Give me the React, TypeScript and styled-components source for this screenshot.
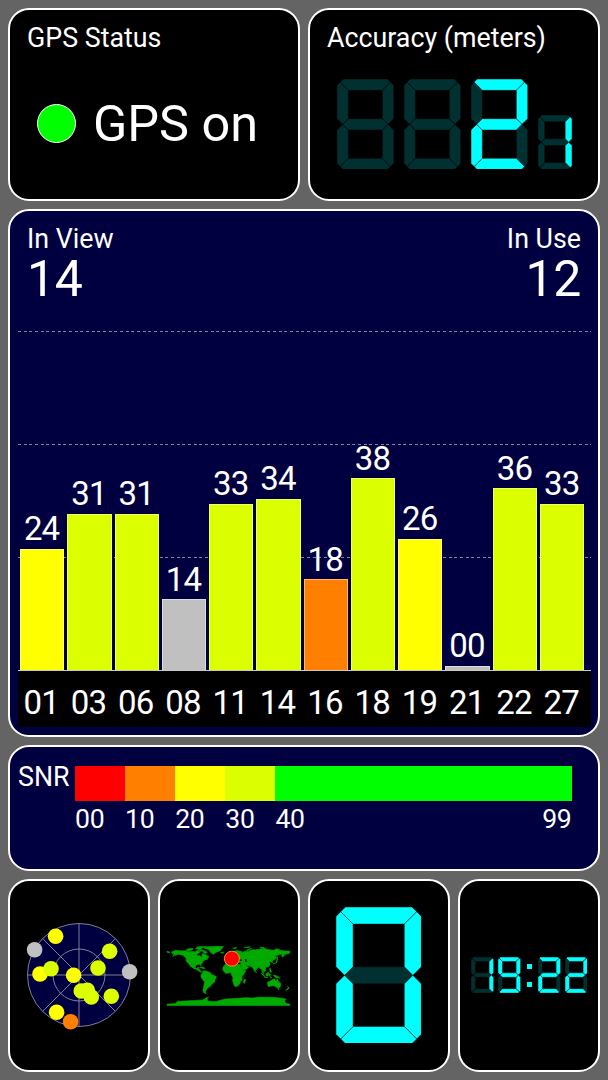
import React from "react";
import styled, { createGlobalStyle } from "styled-components";

const Global = createGlobalStyle`
  * { box-sizing: border-box; }
  body {
    margin: 0;
    background: #646464;
    color: #fff;
    font-family: Roboto, "Liberation Sans", sans-serif;
  }
`;

const C = {
  red: "#ff0000",
  orange: "#ff8000",
  yellow: "#ffff00",
  lime: "#dcff00",
  green: "#00ff00",
  grey: "#c0c0c0",
  lit: "#00ffff",
  unlit: "#003030",
};

const Screen = styled.main`
  width: 608px;
  height: 1080px;
  padding: 8px;
  display: grid;
  grid-template-rows: 192.5px 528px 126px 193px;
  row-gap: 8px;
  overflow: hidden;
`;

const Row = styled.div<{ $cols: number }>`
  display: grid;
  grid-template-columns: repeat(${(p) => p.$cols}, 1fr);
  column-gap: 8px;
`;

const Panel = styled.section<{ $navy?: boolean }>`
  display: flex;
  flex-direction: column;
  min-width: 0;
  border: 2px solid #fff;
  border-radius: 21px;
  background: ${(p) => (p.$navy ? "#000040" : "#000")};
`;

const StatusPanel = styled(Panel)`
  padding: 13px 16px 0 17px;
`;

const Title = styled.h2`
  margin: 0;
  font-size: 26.8px;
  line-height: 30px;
  font-weight: 400;
  white-space: nowrap;
`;

const StatusLine = styled.div`
  display: flex;
  align-items: center;
  gap: 17.5px;
  margin: 42.5px 0 0 9.5px;
  font-size: 50.4px;
  line-height: 56px;
  white-space: nowrap;
`;

const Lamp = styled.span`
  width: 39px;
  height: 39px;
  border: 1px solid #fff;
  border-radius: 50%;
  background: ${C.green};
`;

const AccuracyDigits = styled.div`
  display: flex;
  align-items: flex-end;
  gap: 10.3px;
  margin: 25.5px 0 0 10px;
`;

const ChartHeader = styled.div`
  display: flex;
  justify-content: space-between;
  height: 120px;
  padding: 13px 17px 0 17px;
`;

const Count = styled.div<{ $right?: boolean }>`
  text-align: ${(p) => (p.$right ? "right" : "left")};
`;

const CountValue = styled.div`
  font-size: 50px;
  line-height: 50px;
  letter-spacing: -0.3px;
`;

const gridLine =
  "repeating-linear-gradient(90deg, #8484a0 0 3px, transparent 3px 5.667px)";

const Plot = styled.div`
  display: grid;
  grid-template-columns: repeat(12, 1fr);
  column-gap: 3px;
  align-items: end;
  height: 340px;
  margin: 0 7.5px;
  padding: 0 6.2px 0 2.5px;
  border-bottom: 1px solid #c8c8c8;
  background-image: ${gridLine}, ${gridLine}, ${gridLine};
  background-size: 100% 1px;
  background-position: 0 0, 0 113px, 0 226px;
  background-repeat: no-repeat;
`;

const BarCell = styled.div`
  display: flex;
  flex-direction: column;
  align-items: center;
  font-size: 33px;
  line-height: 38px;
  letter-spacing: -0.8px;
`;

const BarValue = styled.span`
  margin-right: 1px;
`;

const Bar = styled.div<{ $h: number; $color: string }>`
  width: 100%;
  height: ${(p) => p.$h}px;
  margin-top: 0.5px;
  border: 1px solid rgba(255, 255, 255, 0.45);
  border-bottom: 0;
  background: ${(p) => p.$color};
`;

const Ids = styled.div`
  display: grid;
  grid-template-columns: repeat(12, 1fr);
  column-gap: 3px;
  height: 56px;
  margin: 0 7.5px;
  padding: 13px 7px 0 1.5px;
  background: #000;
  font-size: 33px;
  line-height: 38px;
  letter-spacing: -0.8px;
  text-align: center;
`;

const SnrBody = styled.div`
  display: grid;
  grid-template-columns: 57px 496.5px;
  padding: 19px 0 0 8px;
`;

const SnrName = styled(Title)`
  margin-top: -4px;
`;

const Scale = styled.div`
  display: grid;
  grid-template-columns: repeat(4, 50.1px) 1fr;
  grid-template-rows: 35px 30px;
  row-gap: 3px;
  font-size: 26.6px;
  line-height: 30px;
  letter-spacing: -0.3px;
`;

const Swatch = styled.div<{ $color: string }>`
  background: ${(p) => p.$color};
`;

const Tick = styled.div`
  display: flex;
  justify-content: space-between;
`;

const Centered = styled(Panel)`
  align-items: center;
  justify-content: center;
  padding-right: 0.5px;
`;

const Clock = styled.div`
  display: flex;
  align-items: center;
  gap: 4px;
  margin-left: 1px;
`;

const Colon = styled.div`
  display: flex;
  flex-direction: column;
  justify-content: space-between;
  width: 5px;
  height: 23px;
  margin: 0 2px 0 2.5px;
`;

const ColonDot = styled.span`
  height: 5px;
  background: ${C.lit};
`;

/* Segment order: a b c d e f g */
const SEGMENTS = [
  "1.1,0 8.9,0 9.45,.55 8,2 2,2 .55,.55",
  "9.45,.55 10,1.1 10,7 9,8 8,7 8,2",
  "9,8 10,9 10,14.9 9.45,15.45 8,14 8,9",
  "2,14 8,14 9.45,15.45 8.9,16 1.1,16 .55,15.45",
  "1,8 2,9 2,14 .55,15.45 0,14.9 0,9",
  ".55,.55 2,2 2,7 1,8 0,7 0,1.1",
  "1,8 2,7 8,7 9,8 8,9 2,9",
];

const DIGITS: Record<string, string> = {
  " ": "0000000",
  "0": "1111110",
  "1": "0110000",
  "2": "1101101",
  "9": "1111011",
};

function SegmentDigit({ value, width }: { value: string; width: number }) {
  const on = DIGITS[value];
  return (
    <svg width={width} height={width * 1.6} viewBox="0 0 10 16" style={{ flex: "none" }}>
      {[0, 1].map((layer) =>
        SEGMENTS.map((pts, i) =>
          Number(on[i]) === layer ? (
            <polygon
              key={`${layer}-${i}`}
              points={pts}
              fill={layer ? C.lit : C.unlit}
              stroke="#000"
              strokeWidth={6 / width}
              strokeOpacity={0.75}
            />
          ) : null
        )
      )}
    </svg>
  );
}

const SATS: [string, number, string][] = [
  ["01", 24, C.yellow],
  ["03", 31, C.lime],
  ["06", 31, C.lime],
  ["08", 14, C.grey],
  ["11", 33, C.lime],
  ["14", 34, C.lime],
  ["16", 18, C.orange],
  ["18", 38, C.lime],
  ["19", 26, C.yellow],
  ["21", 0, C.grey],
  ["22", 36, C.lime],
  ["27", 33, C.lime],
];

const SKY: [number, number, string][] = [
  [-23.4, -38.7, C.yellow],
  [-44.4, -25.3, C.grey],
  [30.6, -23.7, C.lime],
  [19, -7, C.lime],
  [-39, -1, C.yellow],
  [-28, -6.3, C.lime],
  [-5.4, 0.3, C.yellow],
  [50.6, -3.3, C.grey],
  [2.3, 16, C.lime],
  [8.3, 15.3, C.lime],
  [12.3, 22, C.lime],
  [32.3, 21.3, C.lime],
  [-22.4, 37.3, C.yellow],
  [-8.4, 46.7, C.orange],
];

function SkyView() {
  return (
    <svg width={124} height={124} viewBox="-62 -62 124 124">
      <g stroke="#8c8c9c" strokeWidth="0.9" fill="none">
        <circle r="51.5" fill="#000040" />
        <circle r="26" />
        <path d="M-51.5 0H51.5M0-51.5V51.5M-36.4-36.4L36.4 36.4M-36.4 36.4L36.4-36.4" />
      </g>
      {SKY.map(([x, y, color], i) => (
        <circle key={i} cx={x} cy={y} r="7.8" fill={color} />
      ))}
    </svg>
  );
}

/* Coastlines in degrees: x = longitude, y = -latitude. */
const LAND = [
  // North and Central America
  "M-168-66L-156-71L-140-70L-128-70L-115-68L-108-68L-96-67L-94-72L-86-69L-82-67L-87-64L-94-60L-92-57L-82-55L-80-51L-78-55L-77-62L-70-61L-65-58L-57-53L-60-50L-66-50L-60-46L-66-44L-70-43L-75-39L-76-35L-81-31L-80-26L-82-28L-84-30L-90-30L-97-27L-97-21L-94-18L-90-21L-87-21L-88-16L-83-15L-83-10L-77-8L-83-8L-92-15L-105-20L-113-30L-110-23L-117-33L-124-40L-124-48L-132-56L-145-60L-154-58L-164-54L-157-59L-165-61L-161-64Z",
  // Arctic islands and the eastern tip of Siberia
  "M-125-72L-118-76L-104-77L-106-73L-114-70L-120-71Z",
  "M-90-73L-80-74L-70-70L-62-66L-66-62L-74-65L-73-68L-86-71Z",
  "M-97-76L-82-75L-80-77L-92-78Z",
  "M-94-81L-80-83L-64-83L-78-78L-88-77Z",
  "M-72-78L-60-82L-32-83.5L-14-82L-20-76L-24-70L-38-65L-44-60L-52-65L-55-70L-60-75Z",
  "M-24-65L-14-66L-14-64L-20-63Z",
  "M-180-69L-171-66L-174-64L-180-66Z",
  // Caribbean
  "M-85-22L-78-23L-68-19L-74-18L-78-20Z",
  // South America
  "M-77-8L-72-12L-62-10L-52-5L-50-1L-40 3L-35 6L-39 14L-41 22L-48 26L-53 34L-58 35L-58 38L-63 40L-65 45L-68 50L-65 55L-72 53L-75 47L-73 38L-70 20L-76 14L-81 5L-80-1L-77-4Z",
  // Africa
  "M-6-35L10-37L11-33L20-31L32-31L37-22L43-12L51-12L44-1L39 6L40 15L35 20L33 27L26 34L18 34L15 27L12 17L13 8L9 1L9-4L4-6L-8-4L-13-9L-17-15L-16-22L-10-30Z",
  "M49 12L50 16L47 25L44 24L44 17Z",
  // Europe and Asia
  "M-9-43L-2-43L-1-47L-5-48L2-51L8-54L8-57L11-56L12-54L20-54L23-59L30-60L22-61L25-65L18-61L16-56L12-57L5-59L5-62L14-68L25-71L40-67L34-67L40-65L46-68L60-69L68-73L80-73L90-75L104-78L113-74L130-72L140-73L160-70L180-69L180-65L177-62L164-60L163-56L157-51L156-58L160-61L150-59L136-55L141-52L138-47L131-43L128-39L129-35L126-35L125-39L118-39L122-37L119-35L122-31L118-24L108-21L109-12L105-9L100-13L104-2L98-8L98-16L94-17L88-22L80-15L78-8L73-17L68-24L57-26L50-30L55-25L59-22L52-16L43-13L35-28L36-36L27-37L26-40L40-41L36-45L30-46L27-42L23-37L19-41L13-46L18-40L16-38L10-44L3-42L-2-37L-9-37Z",
  "M-5-50L1-51L-2-56L-3-59L-6-57L-3-54Z",
  "M-10-52L-6-52L-6-55L-9-54Z",
  "M52-71L56-71L68-77L58-75Z",
  "M12-78L25-80L20-77Z",
  "M46-80L64-82L58-80Z",
  "M92-80L104-79L96-81Z",
  "M136-75L150-75L146-73L138-73Z",
  // East Asian and Oceanian islands
  "M130-32L137-34L141-38L141-45L145-44L142-41L141-35L134-33Z",
  "M142-54L144-50L142-46Z",
  "M120-18L123-18L126-7L122-8Z",
  "M80-9L82-7L80-6Z",
  "M95-5L104 1L106 6L100 1Z",
  "M106 6L115 8L114 9L105 7Z",
  "M109-2L117-7L119-5L116 4L110 3Z",
  "M119-1L125-1L121 1L123 5L119 4Z",
  "M131 1L138 2L147 6L150 11L143 8L138 8L133 4Z",
  "M122 9L127 8L125 10Z",
  "M114 22L122 18L129 14L136 12L136 15L140 18L142 11L146 19L153 25L153 31L150 37L144 39L138 35L132 32L124 33L116 35Z",
  "M145 41L148 41L147 44Z",
  "M173 35L178 38L174 42L167 46L172 41L175 38Z",
  // Antarctica
  "M-180 86L-155 84L-150 78L-130 77L-100 75L-75 74L-66 68L-58 65L-62 70L-62 77L-40 79L-28 76L-10 71L10 70L30 69L50 67L70 68L90 66L110 66L130 66L150 68L168 71L164 78L170 84L180 86L180 90L-180 90Z",
].join("");

function WorldMap() {
  return (
    <svg width={123} height={61.5} viewBox="-180 -90 360 180" overflow="visible">
      <path d={LAND} fill="#00aa00" stroke="#00aa00" strokeWidth="1.8" />
      {/* Caspian and Black seas */}
      <path d="M48-46L53-46L53-37L49-38ZM29-45L40-44L40-42L29-42Z" fill="#000" />
      <circle cx="10" cy="-47" r="22" fill={C.red} stroke="#ffb400" strokeWidth="2.5" />
    </svg>
  );
}

export default function App() {
  return (
    <>
      <Global />
      <Screen>
        <Row $cols={2}>
          <StatusPanel>
            <Title>GPS Status</Title>
            <StatusLine>
              <Lamp />
              GPS on
            </StatusLine>
          </StatusPanel>
          <StatusPanel>
            <Title>Accuracy (meters)</Title>
            <AccuracyDigits>
              <SegmentDigit value=" " width={56.7} />
              <SegmentDigit value=" " width={56.7} />
              <SegmentDigit value="2" width={56.7} />
              <SegmentDigit value="1" width={34} />
            </AccuracyDigits>
          </StatusPanel>
        </Row>

        <Panel $navy>
          <ChartHeader>
            <Count>
              <Title>In View</Title>
              <CountValue>14</CountValue>
            </Count>
            <Count $right>
              <Title>In Use</Title>
              <CountValue>12</CountValue>
            </Count>
          </ChartHeader>
          <Plot>
            {SATS.map(([id, snr, color]) => (
              <BarCell key={id}>
                <BarValue>{String(snr).padStart(2, "0")}</BarValue>
                <Bar $h={Math.max(4, snr * 5.04 - 0.4)} $color={color} />
              </BarCell>
            ))}
          </Plot>
          <Ids>
            {SATS.map(([id]) => (
              <span key={id}>{id}</span>
            ))}
          </Ids>
        </Panel>

        <Panel $navy>
          <SnrBody>
            <SnrName>SNR</SnrName>
            <Scale>
              <Swatch $color={C.red} />
              <Swatch $color={C.orange} />
              <Swatch $color={C.yellow} />
              <Swatch $color={C.lime} />
              <Swatch $color={C.green} />
              <Tick>00</Tick>
              <Tick>10</Tick>
              <Tick>20</Tick>
              <Tick>30</Tick>
              <Tick>
                <span>40</span>
                <span>99</span>
              </Tick>
            </Scale>
          </SnrBody>
        </Panel>

        <Row $cols={4}>
          <Centered>
            <SkyView />
          </Centered>
          <Centered>
            <WorldMap />
          </Centered>
          <Centered>
            <SegmentDigit value="0" width={85.4} />
          </Centered>
          <Centered>
            <Clock>
              <SegmentDigit value="1" width={22.6} />
              <SegmentDigit value="9" width={22.6} />
              <Colon>
                <ColonDot />
                <ColonDot />
              </Colon>
              <SegmentDigit value="2" width={22.6} />
              <SegmentDigit value="2" width={22.6} />
            </Clock>
          </Centered>
        </Row>
      </Screen>
    </>
  );
}
